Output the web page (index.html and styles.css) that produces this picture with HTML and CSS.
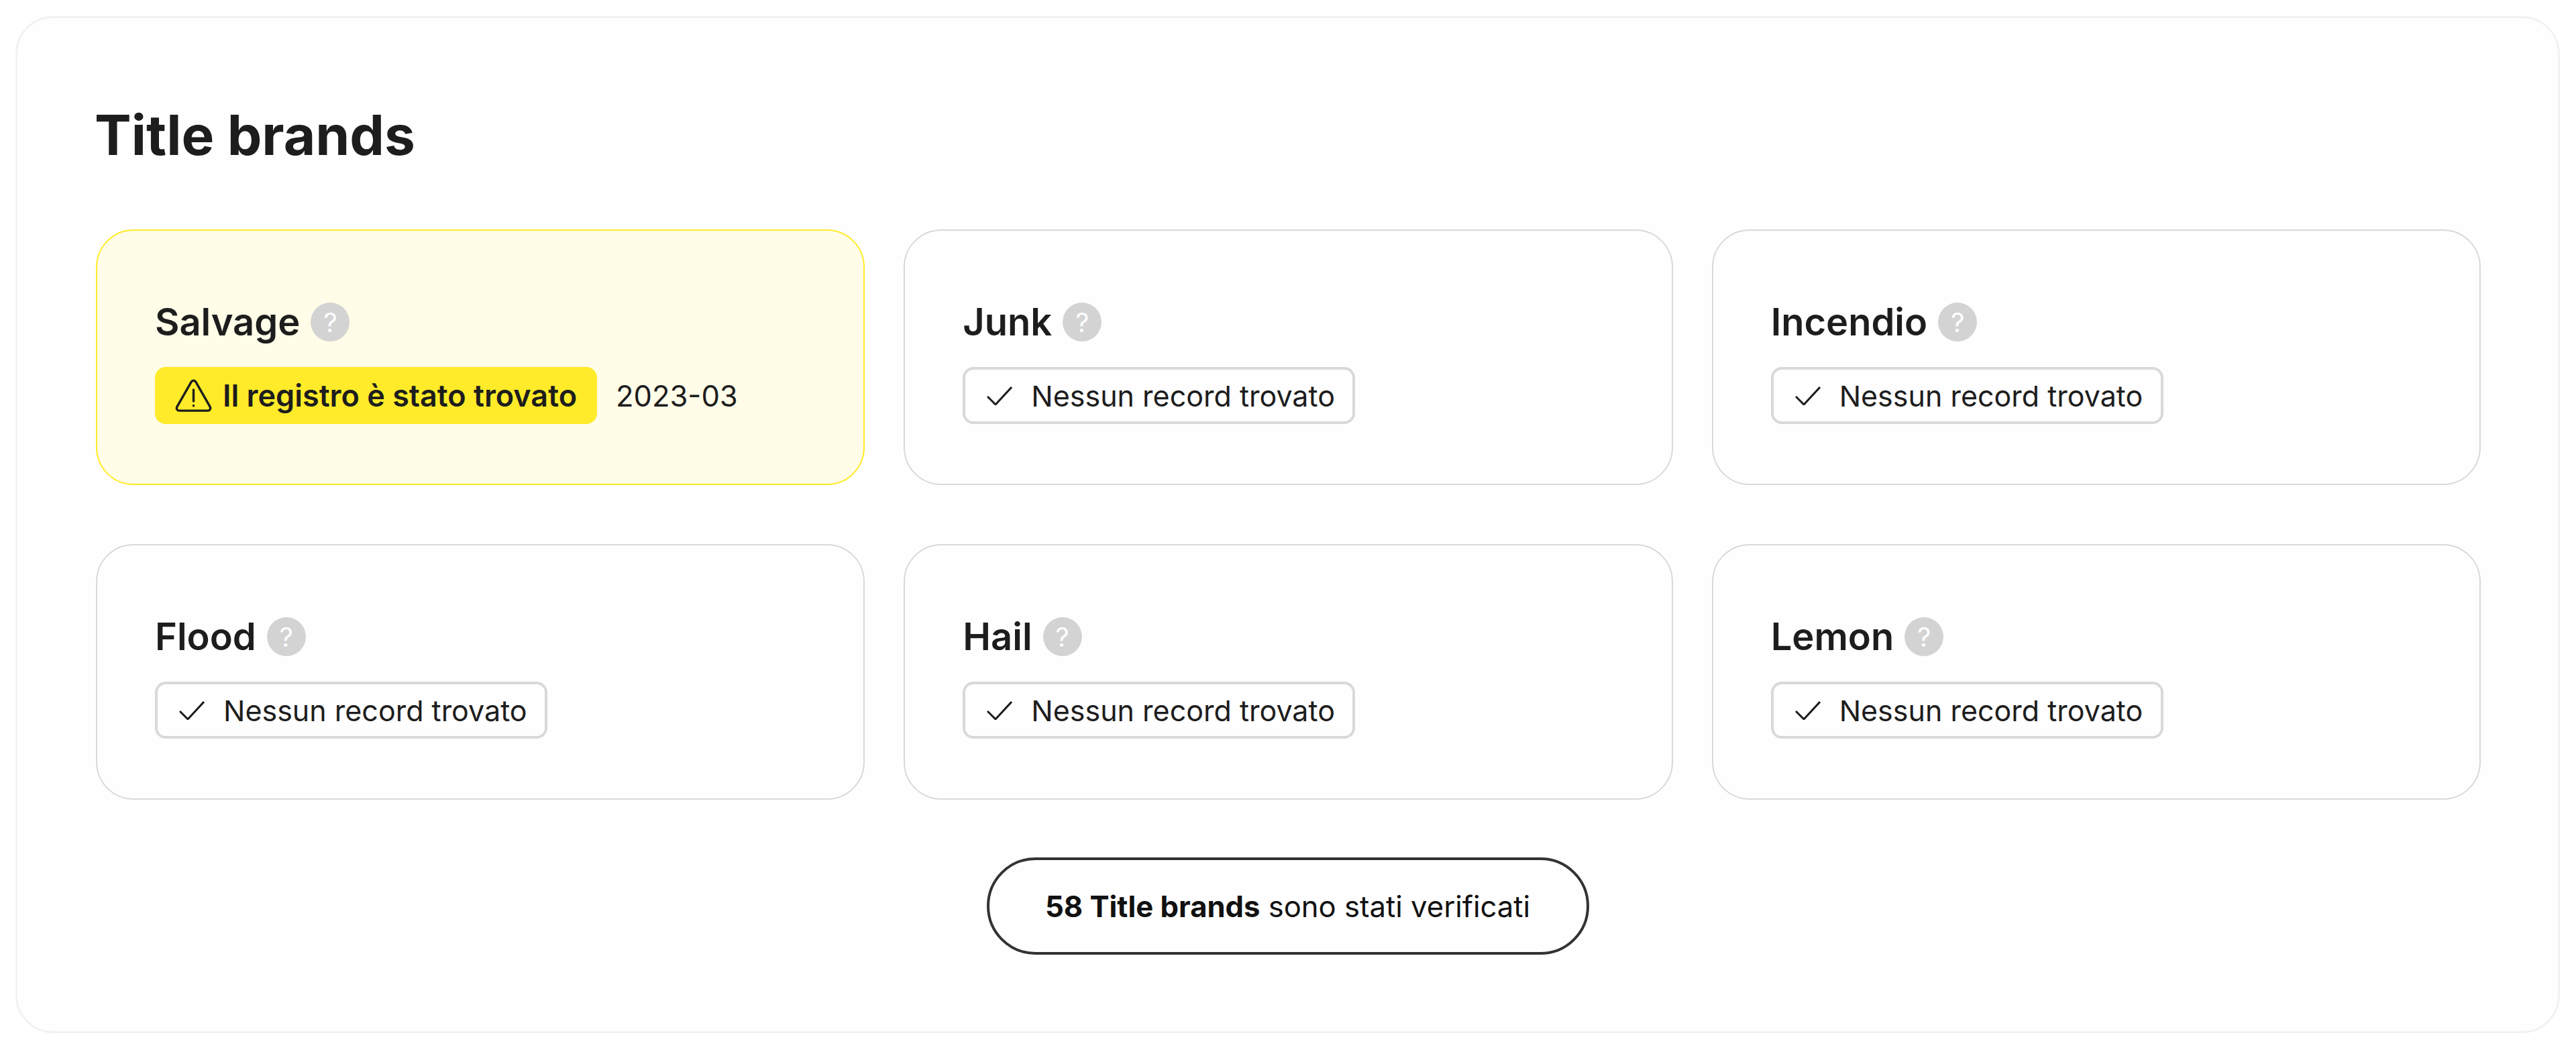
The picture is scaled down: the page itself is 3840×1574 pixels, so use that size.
FILE: index.html
```html
<!DOCTYPE html>
<html>
	<head>
		<meta charset="utf-8" />
		<title>Title brands</title>
		<link rel="stylesheet" href="styles.css">
	</head>
	<body>
		<section class="panel">
			<h1 class="panel-title">Title brands</h1>
			<div class="brand-grid">
				<div class="brand brand-found">
					<div class="brand-name">Salvage <span class="help">?</span></div>
					<div class="brand-status">
						<span class="badge badge-found">
							<svg class="icon-warn" viewBox="0 0 55 49" fill="none" stroke="#1d1d1d" stroke-width="3.4" stroke-linejoin="round" stroke-linecap="round">
								<path d="M24.2 4.2 3 41.2c-1.7 3 .3 5.9 3.4 5.9h42.2c3.1 0 5.1-2.9 3.4-5.9L30.8 4.2c-1.5-2.7-5.1-2.7-6.6 0z"/>
								<path d="M27.5 16v17"/>
								<path d="M27.5 39.5v.4"/>
							</svg>
							Il registro è stato trovato
						</span>
						<span class="brand-date">2023-03</span>
					</div>
				</div>
				<div class="brand">
					<div class="brand-name">Junk <span class="help">?</span></div>
					<div class="brand-status">
						<span class="badge badge-none">
							<svg class="icon-check" viewBox="0 0 38 28" fill="none" stroke="#1d1d1d" stroke-width="3"><path d="M1 15l12 12L37 1"/></svg>
							Nessun record trovato
						</span>
					</div>
				</div>
				<div class="brand">
					<div class="brand-name">Incendio <span class="help">?</span></div>
					<div class="brand-status">
						<span class="badge badge-none">
							<svg class="icon-check" viewBox="0 0 38 28" fill="none" stroke="#1d1d1d" stroke-width="3"><path d="M1 15l12 12L37 1"/></svg>
							Nessun record trovato
						</span>
					</div>
				</div>
				<div class="brand">
					<div class="brand-name">Flood <span class="help">?</span></div>
					<div class="brand-status">
						<span class="badge badge-none">
							<svg class="icon-check" viewBox="0 0 38 28" fill="none" stroke="#1d1d1d" stroke-width="3"><path d="M1 15l12 12L37 1"/></svg>
							Nessun record trovato
						</span>
					</div>
				</div>
				<div class="brand">
					<div class="brand-name">Hail <span class="help">?</span></div>
					<div class="brand-status">
						<span class="badge badge-none">
							<svg class="icon-check" viewBox="0 0 38 28" fill="none" stroke="#1d1d1d" stroke-width="3"><path d="M1 15l12 12L37 1"/></svg>
							Nessun record trovato
						</span>
					</div>
				</div>
				<div class="brand">
					<div class="brand-name">Lemon <span class="help">?</span></div>
					<div class="brand-status">
						<span class="badge badge-none">
							<svg class="icon-check" viewBox="0 0 38 28" fill="none" stroke="#1d1d1d" stroke-width="3"><path d="M1 15l12 12L37 1"/></svg>
							Nessun record trovato
						</span>
					</div>
				</div>
			</div>
			<div class="summary-row">
				<div class="summary"><b>58 Title brands</b> sono stati verificati</div>
			</div>
		</section>
	</body>
</html>
```

FILE: styles.css
```css
html, body{
	margin: 0;
	background-color: #ffffff;
}
body{
	padding: 24px 24px 0 23px;
	font-family: Inter, "Liberation Sans", sans-serif;
	color: #1d1d1d;
}
.panel{
	box-sizing: border-box;
	height: 1516px;
	border: 3px solid #f2f2f2;
	border-radius: 56px;
	background-color: #fefefe;
	padding: 0 115px 0 117px;
}
.panel-title{
	margin: 0;
	padding-top: 125px;
	padding-bottom: 90px;
	font-size: 82px;
	line-height: 100px;
	font-weight: 700;
	text-indent: -2px;
}
.brand-grid{
	display: grid;
	grid-template-columns: repeat(3, 1fr);
	column-gap: 58px;
	row-gap: 88px;
}
.brand{
	box-sizing: border-box;
	height: 381px;
	border: 2px solid #d9d9d9;
	border-radius: 56px;
	padding: 107px 86px 0;
}
.brand-found{
	background-color: #fffce8;
	border-color: #ffeb29;
}
.brand-name{
	display: flex;
	align-items: center;
	gap: 16px;
	height: 58px;
	font-size: 56px;
	font-weight: 600;
}
.help{
	display: flex;
	align-items: center;
	justify-content: center;
	width: 58px;
	height: 58px;
	border-radius: 50%;
	background-color: #d3d3d3;
	color: #ffffff;
	font-size: 40px;
	font-weight: 400;
}
.brand-status{
	display: flex;
	align-items: center;
	gap: 28px;
	margin-top: 38px;
}
.badge{
	box-sizing: border-box;
	display: flex;
	align-items: center;
	height: 85px;
	border-radius: 16px;
	font-size: 43px;
}
.badge-found{
	width: 659px;
	padding-left: 30px;
	gap: 16px;
	background-color: #ffeb29;
	font-size: 45px;
	font-weight: 600;
}
.badge-none{
	width: 585px;
	padding-left: 32px;
	gap: 28px;
	border: 4px solid #d9d9d9;
}
.icon-warn{
	width: 55px;
	height: 49px;
}
.icon-check{
	width: 38px;
	height: 28px;
}
.brand-date{
	font-size: 43.5px;
}
.summary-row{
	display: flex;
	justify-content: center;
	margin-top: 86px;
	padding-right: 2px;
}
.summary{
	box-sizing: border-box;
	display: flex;
	align-items: center;
	justify-content: center;
	gap: 0.28em;
	width: 898px;
	height: 145px;
	padding-top: 2px;
	border: 4px solid #333333;
	border-radius: 73px;
	font-size: 43.6px;
	color: #111111;
}
.summary b{
	font-weight: 700;
}
```
